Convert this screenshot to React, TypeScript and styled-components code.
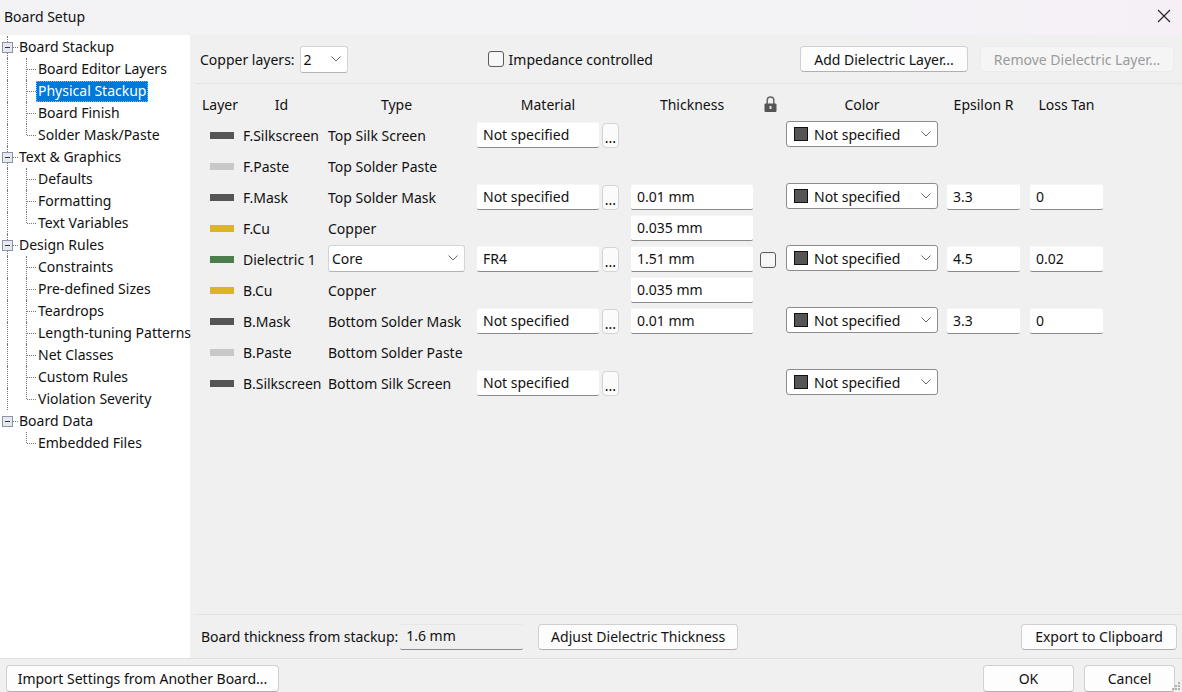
import React from "react";
import styled, { createGlobalStyle } from "styled-components";

const Global = createGlobalStyle`
  html, body { margin: 0; padding: 0; height: 100%; overflow: hidden; }
  body { font-family: "Noto Sans", "Open Sans", sans-serif; font-size: 14px; color: #111; }
  * { box-sizing: border-box; }
`;

const Dialog = styled.div`
  width: 1182px;
  height: 692px;
  display: flex;
  flex-direction: column;
  background: #f0f0f0;
  overflow: hidden;
  position: relative;
`;

const TitleBar = styled.div`
  height: 35px;
  flex: none;
  display: flex;
  align-items: center;
  justify-content: space-between;
  padding: 0 11px 3px 4px;
  background: linear-gradient(90deg, #f3f3f6, #f3f3f6 70%, #f6f0f6);
`;

const Body = styled.div`
  height: 624px;
  flex: none;
  display: flex;
  border-bottom: 1px solid #e0e0e0;
`;

const Tree = styled.div`
  width: 190px;
  flex: none;
  padding-top: 1px;
  background: #fff;
`;

const TreeRow = styled.div<{ $child?: boolean; $last?: boolean }>`
  height: 22px;
  position: relative;
  display: flex;
  align-items: center;
  padding-left: ${(p) => (p.$child ? 36 : 17)}px;
  white-space: nowrap;
  ${(p) =>
    p.$child
      ? `
    &::before {
      content: "";
      position: absolute;
      left: 26px;
      top: 0;
      height: ${p.$last ? 11 : 22}px;
      border-left: 1px dotted #777;
    }
    &::after {
      content: "";
      position: absolute;
      left: 27px;
      top: 11px;
      width: 9px;
      border-top: 1px dotted #777;
    }`
      : `
    &::after {
      content: "";
      position: absolute;
      left: 13px;
      top: 11px;
      width: 5px;
      border-top: 1px dotted #777;
    }`}
`;

const Trunk = styled.span`
  position: absolute;
  left: 7px;
  top: 0;
  height: 22px;
  border-left: 1px dotted #777;
`;

const Expander = styled.svg`
  position: absolute;
  left: 2px;
  top: 6px;
`;

const RowLabel = styled.span<{ $selected?: boolean }>`
  padding: 0 2px;
  height: 21px;
  line-height: 20px;
  ${(p) =>
    p.$selected
      ? `
    background: #0078d7;
    color: #fff;
    outline: 1px dotted #ff9a28;
    outline-offset: -1px;`
      : ""}
`;

const Main = styled.div`
  flex: 1;
  display: flex;
  flex-direction: column;
  min-width: 0;
`;

const TopBar = styled.div`
  height: 49px;
  flex: none;
  margin-left: 5px;
  padding: 0 8px 0 5px;
  display: flex;
  align-items: center;
  border-bottom: 1px solid #e3e3e3;
`;

const CheckRow = styled.label`
  display: flex;
  align-items: center;
  gap: 5px;
  margin-left: 140px;
  margin-right: auto;
`;

const CheckBox = styled.span`
  width: 16px;
  height: 16px;
  flex: none;
  background: #f6f6f6;
  border: 1px solid #5a5a5a;
  border-radius: 3px;
`;

const Button = styled.button<{ $width: number; $disabled?: boolean; $mr?: number }>`
  width: ${(p) => p.$width}px;
  height: 26px;
  flex: none;
  padding: 0;
  margin-right: ${(p) => p.$mr ?? 0}px;
  font: inherit;
  color: ${(p) => (p.$disabled ? "#9a9a9a" : "#111")};
  background: ${(p) => (p.$disabled ? "#f5f5f5" : "#fdfdfd")};
  border: 1px solid ${(p) => (p.$disabled ? "#ebebeb" : "#d0d0d0")};
  border-bottom-color: ${(p) => (p.$disabled ? "#ebebeb" : "#b0b0b0")};
  border-radius: 4px;
  white-space: nowrap;
`;

const Select = styled.div<{ $width: number; $height?: number }>`
  width: ${(p) => p.$width}px;
  height: ${(p) => p.$height ?? 26}px;
  flex: none;
  display: flex;
  align-items: center;
  justify-content: space-between;
  padding: 0 6px 0 3px;
  background: #fff;
  border: 1px solid #d4d4d4;
  border-bottom-color: #b4b4b4;
  border-radius: 3px;
`;

const CoreSelect = styled(Select)`
  margin-bottom: 3px;
`;

const ColorSelect = styled(Select)`
  justify-content: flex-start;
  gap: 6px;
  padding-left: 7px;
  margin-bottom: 3px;
  border-color: #8c8c8c;
  & > svg:last-child {
    margin-left: auto;
  }
`;

const ColorChip = styled.span`
  width: 14px;
  height: 14px;
  flex: none;
  background: #555;
  border: 1px solid #111;
`;

const Table = styled.div`
  flex: 1;
  padding: 5px 0 0 11px;
`;

const GridRow = styled.div`
  height: 31px;
  display: grid;
  grid-template-columns: 42px 85px 149px 154px 129px 26px 161px 83px 73px;
  align-items: center;
`;

const Head = styled.div<{ $width: number; $left?: boolean }>`
  width: ${(p) => p.$width}px;
  padding-left: ${(p) => (p.$left ? 1 : 0)}px;
  text-align: ${(p) => (p.$left ? "left" : "center")};
  white-space: nowrap;
`;

const LockCell = styled.div`
  width: 20px;
  display: flex;
  justify-content: center;
  margin-bottom: 1px;
`;

const Swatch = styled.span<{ $color: string }>`
  display: block;
  width: 24px;
  height: 7px;
  margin-left: 9px;
  background: ${(p) => p.$color};
`;

const CellText = styled.span`
  white-space: nowrap;
`;

const Pair = styled.div`
  display: flex;
  gap: 3px;
  align-items: flex-start;
  margin-bottom: 1px;
`;

const Field = styled.div<{ $width: number; $flat?: boolean }>`
  width: ${(p) => p.$width}px;
  height: 26px;
  flex: none;
  display: flex;
  align-items: center;
  padding: 0 6px 2px;
  background: ${(p) => (p.$flat ? "#f0f0f0" : "#fff")};
  border-bottom: 1px solid #8a8a8a;
  border-top: 1px solid ${(p) => (p.$flat ? "#e6e6e6" : "#f6f6f6")};
  border-radius: 2px;
  white-space: nowrap;
`;

const RowField = styled(Field)`
  margin-bottom: 1px;
`;

const Dots = styled.button`
  width: 17px;
  height: 25px;
  flex: none;
  margin-top: 1px;
  padding: 0;
  font: inherit;
  line-height: 28px;
  background: #fbfbfb;
  border: 1px solid #d4d4d4;
  border-radius: 4px;
`;

const Footer = styled.div`
  height: 44px;
  flex: none;
  margin-left: 5px;
  padding: 0 5px 0 6px;
  display: flex;
  align-items: center;
  border-top: 1px solid #e3e3e3;
`;

const CopperLabel = styled.span`
  margin-right: 5px;
  white-space: nowrap;
`;

const ThicknessLabel = styled.span`
  margin-right: 2px;
  letter-spacing: -0.05px;
  white-space: nowrap;
`;

const AdjustButton = styled(Button)`
  margin-left: 15px;
`;

const ExportButton = styled(Button)`
  margin-left: auto;
`;

const BottomBar = styled.div`
  flex: 1;
  display: flex;
  align-items: flex-start;
  padding: 6px 7px 0 6px;
`;

const BottomButton = styled(Button)`
  height: 27px;
`;

const ImportButton = styled(BottomButton)`
  margin-right: auto;
`;

const Grip = styled.svg`
  position: absolute;
  right: 1px;
  bottom: 1px;
`;

const Chevron = () => (
  <svg width="10" height="6" viewBox="0 0 10 6" fill="none" stroke="#666" strokeWidth="1">
    <path d="M0.5 0.5l4.5 4.5 4.5-4.5" />
  </svg>
);

const tree: { label: string; children: string[] }[] = [
  { label: "Board Stackup", children: ["Board Editor Layers", "Physical Stackup", "Board Finish", "Solder Mask/Paste"] },
  { label: "Text & Graphics", children: ["Defaults", "Formatting", "Text Variables"] },
  {
    label: "Design Rules",
    children: [
      "Constraints",
      "Pre-defined Sizes",
      "Teardrops",
      "Length-tuning Patterns",
      "Net Classes",
      "Custom Rules",
      "Violation Severity",
    ],
  },
  { label: "Board Data", children: ["Embedded Files"] },
];

type Layer = {
  id: string;
  color: string;
  type: string;
  material?: string;
  thickness?: string;
  colorSelect?: boolean;
  epsilon?: string;
  loss?: string;
  core?: boolean;
};

const DARK = "#555555";
const PASTE = "#c8c8c8";
const COPPER = "#dcb428";

const layers: Layer[] = [
  { id: "F.Silkscreen", color: DARK, type: "Top Silk Screen", material: "Not specified", colorSelect: true },
  { id: "F.Paste", color: PASTE, type: "Top Solder Paste" },
  { id: "F.Mask", color: DARK, type: "Top Solder Mask", material: "Not specified", thickness: "0.01 mm", colorSelect: true, epsilon: "3.3", loss: "0" },
  { id: "F.Cu", color: COPPER, type: "Copper", thickness: "0.035 mm" },
  { id: "Dielectric 1", color: "#4d7c4d", type: "Core", core: true, material: "FR4", thickness: "1.51 mm", colorSelect: true, epsilon: "4.5", loss: "0.02" },
  { id: "B.Cu", color: COPPER, type: "Copper", thickness: "0.035 mm" },
  { id: "B.Mask", color: DARK, type: "Bottom Solder Mask", material: "Not specified", thickness: "0.01 mm", colorSelect: true, epsilon: "3.3", loss: "0" },
  { id: "B.Paste", color: PASTE, type: "Bottom Solder Paste" },
  { id: "B.Silkscreen", color: DARK, type: "Bottom Silk Screen", material: "Not specified", colorSelect: true },
];

const App = () => (
  <Dialog>
    <Global />
    <TitleBar>
      <span>Board Setup</span>
      <svg width="14" height="14" viewBox="0 0 14 14" stroke="#222" strokeWidth="1.1">
        <path d="M1 1l12 12M13 1L1 13" />
      </svg>
    </TitleBar>
    <Body>
      <Tree>
        {tree.map((group, gi) => {
          const trunk = gi < tree.length - 1;
          return (
            <React.Fragment key={group.label}>
              <TreeRow>
                {trunk && <Trunk />}
                <Expander width="11" height="11" viewBox="0 0 11 11">
                  <rect x="0.5" y="0.5" width="10" height="10" fill="#e6e9f0" stroke="#8a94a4" />
                  <path d="M3 5.5h5" stroke="#333" />
                </Expander>
                <RowLabel>{group.label}</RowLabel>
              </TreeRow>
              {group.children.map((child, ci) => (
                <TreeRow key={child} $child $last={ci === group.children.length - 1}>
                  {trunk && <Trunk />}
                  <RowLabel $selected={child === "Physical Stackup"}>{child}</RowLabel>
                </TreeRow>
              ))}
            </React.Fragment>
          );
        })}
      </Tree>
      <Main>
        <TopBar>
          <CopperLabel>Copper layers:</CopperLabel>
          <Select $width={48} $height={27}>
            2
            <Chevron />
          </Select>
          <CheckRow>
            <CheckBox />
            Impedance controlled
          </CheckRow>
          <Button $width={168} $mr={12}>
            Add Dielectric Layer...
          </Button>
          <Button $width={194} $disabled>
            Remove Dielectric Layer...
          </Button>
        </TopBar>
        <Table>
          <GridRow>
            <Head $width={38} $left>Layer</Head>
            <Head $width={77}>Id</Head>
            <Head $width={137}>Type</Head>
            <Head $width={142}>Material</Head>
            <Head $width={122}>Thickness</Head>
            <LockCell>
              <svg width="13" height="16" viewBox="0 0 13 16">
                <path d="M3.2 8V4.2a3.3 3.3 0 0 1 6.6 0V8" fill="none" stroke="#666" strokeWidth="1.5" />
                <rect x="0.5" y="7.5" width="12" height="8.5" rx="1" fill="#555" />
                <rect x="5.5" y="10" width="2" height="3" fill="#e4e4e4" />
              </svg>
            </LockCell>
            <Head $width={152}>Color</Head>
            <Head $width={73}>Epsilon R</Head>
            <Head $width={73}>Loss Tan</Head>
          </GridRow>
          {layers.map((l) => (
            <GridRow key={l.id}>
              <Swatch $color={l.color} />
              <CellText>{l.id}</CellText>
              {l.core ? (
                <CoreSelect $width={137} $height={27}>
                  {l.type}
                  <Chevron />
                </CoreSelect>
              ) : (
                <CellText>{l.type}</CellText>
              )}
              {l.material ? (
                <Pair>
                  <Field $width={122}>{l.material}</Field>
                  <Dots>...</Dots>
                </Pair>
              ) : (
                <span />
              )}
              {l.thickness ? <RowField $width={122}>{l.thickness}</RowField> : <span />}
              {l.core ? <CheckBox /> : <span />}
              {l.colorSelect ? (
                <ColorSelect $width={152}>
                  <ColorChip />
                  Not specified
                  <Chevron />
                </ColorSelect>
              ) : (
                <span />
              )}
              {l.epsilon ? <RowField $width={73}>{l.epsilon}</RowField> : <span />}
              {l.loss ? <RowField $width={73}>{l.loss}</RowField> : <span />}
            </GridRow>
          ))}
        </Table>
        <Footer>
          <ThicknessLabel>Board thickness from stackup:</ThicknessLabel>
          <Field $width={123} $flat>1.6 mm</Field>
          <AdjustButton $width={200}>Adjust Dielectric Thickness</AdjustButton>
          <ExportButton $width={156}>Export to Clipboard</ExportButton>
        </Footer>
      </Main>
    </Body>
    <BottomBar>
      <ImportButton $width={273}>Import Settings from Another Board...</ImportButton>
      <BottomButton $width={91} $mr={10}>OK</BottomButton>
      <BottomButton $width={91}>Cancel</BottomButton>
    </BottomBar>
    <Grip width="9" height="9" viewBox="0 0 9 9" fill="#b0b0b0">
      <rect x="6" y="0" width="2" height="2" />
      <rect x="3" y="3" width="2" height="2" />
      <rect x="6" y="3" width="2" height="2" />
      <rect x="0" y="6" width="2" height="2" />
      <rect x="3" y="6" width="2" height="2" />
      <rect x="6" y="6" width="2" height="2" />
    </Grip>
  </Dialog>
);

export default App;
